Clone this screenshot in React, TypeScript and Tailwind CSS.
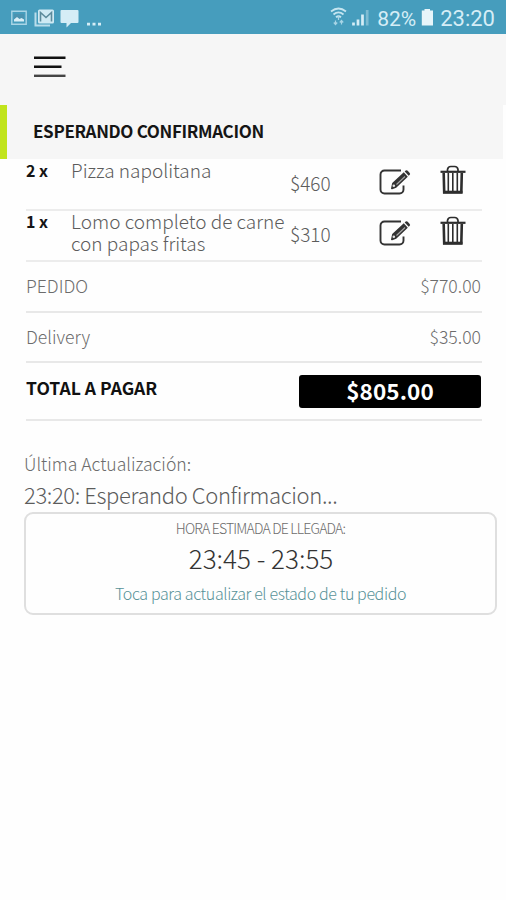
import React from "react";

const items = [
  { qty: "2 x", name: "Pizza napolitana", price: "$460" },
  { qty: "1 x", name: "Lomo completo de carne con papas fritas", price: "$310" },
];

const charges = [
  { label: "PEDIDO", amount: "$770.00", height: "h-[51px]" },
  { label: "Delivery", amount: "$35.00", height: "h-[50px]" },
];

function EditIcon() {
  return (
    <svg width="32" height="28" viewBox="0 0 32 28" fill="none" stroke="#333333">
      <path d="M22 2.500H5.500A4 4 0 0 0 1.500 6.500v15A4 4 0 0 0 5.500 25.500H20.500A4 4 0 0 0 24.500 21.500v-4" strokeWidth="1.900" />
      <path d="M12 20.500l1.200-5.500L24.800 4.300l4 4.400L17.200 19.800l-4 1.400q-1.200.2-1.200-.7z" fill="#333333" stroke="none" />
      <path d="M25.700 3.500l1-.9q1-.8 2 .1l2 2.200q.9 1 0 1.900l-1 1z" fill="#333333" stroke="none" />
      <path d="M17.500 16.500l8.500-8" stroke="#aaaaaa" strokeWidth="1.100" />
      <circle cx="14.800" cy="17.700" r="1.300" fill="#e5e5e5" stroke="none" />
    </svg>
  );
}

function TrashIcon() {
  return (
    <svg width="26" height="30" viewBox="0 0 26 30" fill="none" stroke="#2d2d2d">
      <path d="M7.500 6V4.500Q8 1.500 10.800 1.500h3.900Q17.500 1.500 18 4.500V6" strokeWidth="1.700" />
      <path d="M.5 6.800h25" strokeWidth="2.200" />
      <path d="M3.700 8l.5 19.500h17.100l.5-19.500" fill="#ffffff" strokeWidth="2.600" />
      <path d="M3 27h19.500" strokeWidth="2.600" />
      <path d="M8.300 8v18M12.800 8v18M17.300 8v18" strokeWidth="1.600" />
    </svg>
  );
}

function StatusBar() {
  return (
    <div className="flex h-[34px] items-center bg-[#469dbd] font-[Roboto,sans-serif] text-[#d5edf6]">
      <svg className="ml-[11px]" width="92" height="22" viewBox="0 0 92 22" fill="none">
        <path d="M.8 5.300h14.400v13H.8z" stroke="#a9d5e6" strokeWidth="1.400" />
        <path d="M3 15.500V8h10v7.500z" fill="#d9eff7" />
        <path d="M3 8h10v5.500l-2.500-1.500-2 1-2.500-2-3 2.500z" fill="#4b93b0" />
        <path d="M24.500 6.500V19.500H39" stroke="#b9ddeb" strokeWidth="2" />
        <rect x="27" y="3.500" width="16" height="14" rx="1.500" fill="#cfeaf4" />
        <path d="M29.500 15.500V6.500l5.500 5 5.500-5v9" stroke="#5c8b9c" strokeWidth="1.600" />
        <path d="M50.500 4h16q1 0 1 1v11q0 1-1 1h-6.500l-4.500 4.500v-4.500h-5q-1 0-1-1v-11q0-1 1-1z" fill="#d5edf6" />
        <path d="M76 18.200h3M81.500 18.200h3M87 18.200h3" stroke="#d5edf6" strokeWidth="2.800" />
      </svg>
      <svg className="ml-auto mr-[7px]" width="40" height="22" viewBox="0 0 40 22" fill="none">
        <path d="M1 5.500Q8.500-.5 16 5.500M3.500 8.500q5-4.200 10 0M6 11.300q2.500-2 5 0" stroke="#c5e5f0" strokeWidth="1.800" />
        <path d="M8.500 10v4M5.500 14.500v4m-1.700-2 1.700 2 1.700-2M11.500 18.500v-4m-1.700 2 1.700-2 1.700 2" stroke="#a8d5e6" strokeWidth="1.200" />
        <path d="M23.500 19.500v-3M28 19.500v-6M32.500 19.500V8.500" stroke="#d5edf6" strokeWidth="2.700" />
        <path d="M37.200 19.500V4" stroke="#7dbbd2" strokeWidth="2.700" />
      </svg>
      <span className="mt-[3px] text-[21px] leading-5">82%</span>
      <svg className="ml-[5px]" width="13" height="20" viewBox="0 0 13 20">
        <path d="M3.500 2h5.500v1.500H12V18.500H.8V3.500h2.700z" fill="#e7f5fa" />
      </svg>
      <span className="ml-[6px] mr-[11px] mt-[3px] text-[22px] leading-5">23:20</span>
    </div>
  );
}

export default function App() {
  return (
    <div className="h-[900px] w-[506px] overflow-hidden bg-[#fefefe] font-['Noto_Sans_CJK_SC','Noto_Sans',sans-serif] text-[#5c5c5c]">
      <StatusBar />

      <header className="h-[71px] bg-[#f6f6f6] pl-[34px] pt-[22px]">
        <svg width="32" height="22" viewBox="0 0 32 22" fill="none" strokeWidth="2.400">
          <path d="M0 1.800h31.500M0 10.800h27.500" stroke="#111111" />
          <path d="M0 19.800h31.500" stroke="#444444" />
        </svg>
      </header>

      <div className="mr-[3px] flex h-[54px] items-center border-l-[7px] border-[#c1e41c] bg-[#f6f6f6] pl-[26px]">
        <h1 className="-mt-[2px] whitespace-nowrap text-[17px] font-bold leading-6 tracking-[-0.34px] text-[#151515]">
          ESPERANDO CONFIRMACION
        </h1>
      </div>

      <main className="ml-[24px] mr-[9px]">
        <div className="ml-[2px] mr-[15px] pt-px">
          {items.map((item) => (
            <div key={item.name} className="flex h-[51px] border-b-2 border-[#ececec]">
              <span className="-mt-px w-[45px] text-[16px] font-bold leading-[22px] text-[#151515]">{item.qty}</span>
              <span className="-mt-px w-[219px] text-[19px] font-light leading-[22px]">{item.name}</span>
              <span className="mt-[11px] w-[89px] text-[19px] font-light leading-6">{item.price}</span>
              <span className="mt-[8px] w-[61px]">
                <EditIcon />
              </span>
              <span className="mt-[5px]">
                <TrashIcon />
              </span>
            </div>
          ))}

          {charges.map((charge) => (
            <div
              key={charge.label}
              className={`flex items-center justify-between border-b-2 border-[#e8e8e8] pr-px text-[17.6px] font-light text-[#6c6c6c] ${charge.height}`}
            >
              <span>{charge.label}</span>
              <span>{charge.amount}</span>
            </div>
          ))}

          <div className="flex h-[58px] justify-between border-b-2 border-[#e8e8e8] pr-px">
            <span className="mt-[13px] text-[17.5px] font-bold leading-6 text-[#111111]">TOTAL A PAGAR</span>
            <span className="mt-3 flex h-[33px] w-[182px] items-center justify-center rounded-[3px] bg-black pb-px text-[22.5px] font-bold tracking-[0.1px] text-white">
              $805.00
            </span>
          </div>
        </div>

        <p className="mt-[31px] text-[17.6px] font-light leading-6 text-[#6c6c6c]">Última Actualización:</p>
        <p className="mt-[3px] text-[22px] font-light leading-[30px] tracking-[-0.38px]">
          23:20: Esperando Confirmacion...
        </p>

        <button className="mt-[3px] flex h-[103px] w-full flex-col items-center rounded-[9px] border-2 border-[#dfdfdf] font-light">
          <span className="mt-[4px] text-[14px] leading-5 tracking-[-0.8px] text-[#6c6c6c]">HORA ESTIMADA DE LLEGADA:</span>
          <span className="ml-px mt-[2px] text-[26px] leading-9 text-[#333333]">23:45 - 23:55</span>
          <span className="mt-[5px] text-[16px] leading-6 tracking-[-0.38px] text-[#579298]">
            Toca para actualizar el estado de tu pedido
          </span>
        </button>
      </main>
    </div>
  );
}
